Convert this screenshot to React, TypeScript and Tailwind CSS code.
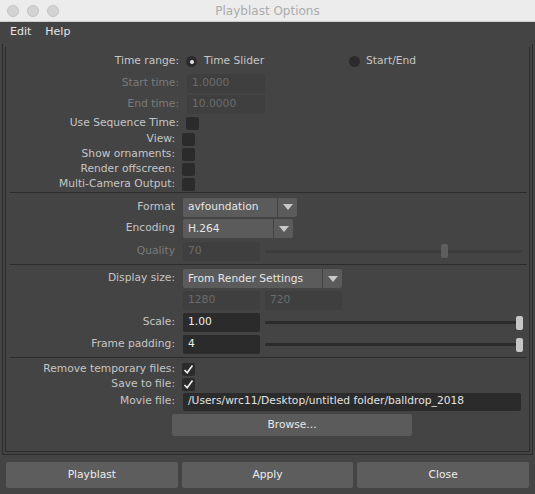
import React from 'react'

const Arrow = () => (
    <svg width="10" height="6" viewBox="0 0 10 6">
        <polygon points="0,0 10,0 5,6" fill="#c8c8c8" />
    </svg>
)

const Check = () => (
    <svg width="13" height="13" viewBox="0 0 13 13">
        <polyline points="2.5,7 5.2,9.8 10.5,2.5" fill="none" stroke="#f2f2f2" strokeWidth="1.6" />
    </svg>
)

function Box({ checked }: { checked?: boolean }) {
    return (
        <div className="w-[13px] h-[13px] rounded-[2px] bg-[#2b2b2b] flex items-center justify-center">
            {checked && <Check />}
        </div>
    )
}

function Dropdown({ value, w }: { value: string; w: string }) {
    return (
        <div className="flex h-[19px] gap-px">
            <div className={`${w} h-full bg-[#5b5b5b] rounded-l-[2px] pl-[5px] pt-px flex items-center text-[#e6e6e6]`}>
                {value}
            </div>
            <div className="w-[19px] h-full bg-[#5b5b5b] rounded-r-[2px] flex items-center justify-center">
                <Arrow />
            </div>
        </div>
    )
}

function Slider({ pos, disabled }: { pos: string; disabled?: boolean }) {
    return (
        <div className="relative flex-1 h-[14px] flex items-center mr-[7px]">
            <div className={`w-full h-[3px] rounded-full ${disabled ? 'bg-[#3c3c3c]' : 'bg-[#2b2b2b]'}`} />
            <div
                className={`absolute top-0 w-[7px] h-[14px] rounded-[2px] ${disabled ? 'bg-[#5e5e5e]' : 'bg-[#c6c6c6]'}`}
                style={{ left: pos }}
            />
        </div>
    )
}

const Sep = ({ className }: { className: string }) => (
    <div className={`${className} ml-[4px] mr-[2px] h-px bg-[#2c2c2c]`} />
)

export default function App() {
    return (
        <div className="w-[535px] h-[494px] bg-[#444444] flex flex-col font-['DejaVu_Sans',sans-serif] text-[10.7px] text-[#c6c6c6] overflow-hidden">
            {/* title bar */}
            <div className="h-[22px] shrink-0 bg-[#ececec] border-b border-[#cdcdcd] grid grid-cols-[70px_1fr_70px] items-center">
                <div className="flex gap-[8px] pl-[7px]">
                    <div className="w-[12px] h-[12px] rounded-full bg-[#d3d3d3] border border-[#c4c4c4]" />
                    <div className="w-[12px] h-[12px] rounded-full bg-[#d3d3d3] border border-[#c4c4c4]" />
                    <div className="w-[12px] h-[12px] rounded-full bg-[#d3d3d3] border border-[#c4c4c4]" />
                </div>
                <div className="text-center text-[12px] text-[#ababab] pt-px">Playblast Options</div>
                <div />
            </div>

            {/* menu */}
            <div className="h-[20px] shrink-0 flex items-center gap-[14px] pl-[10px] pt-px text-[11px] text-[#e4e4e4]">
                <span>Edit</span>
                <span>Help</span>
            </div>

            {/* frame */}
            <div className="mt-[2px] mx-[2px] h-[411px] shrink-0 border-x border-b border-[#2c2c2c] pt-[3px] px-[2px] pb-[2px] flex">
                <div className="flex-1 border-x border-b border-[#2c2c2c] pt-[3px] flex flex-col [&>div]:pt-px">
                    <div className="h-[22px] flex items-center">
                        <div className="w-[173px] text-right">Time range:</div>
                        <div className="ml-[7px] w-[11px] h-[11px] rounded-full bg-[#2b2b2b] flex items-center justify-center">
                            <div className="w-[4px] h-[4px] rounded-full bg-[#e8e8e8]" />
                        </div>
                        <span className="ml-[7px]">Time Slider</span>
                        <div className="ml-[85px] w-[11px] h-[11px] rounded-full bg-[#2b2b2b]" />
                        <span className="ml-[6px]">Start/End</span>
                    </div>
                    <div className="h-[21px] flex items-center">
                        <div className="w-[173px] text-right text-[#7b7b7b]">Start time:</div>
                        <div className="ml-[8px] w-[78px] h-[19px] bg-[#3f3f3f] rounded-[2px] pl-[5px] flex items-center text-[#6c6c6c]">1.0000</div>
                    </div>
                    <div className="h-[22px] flex items-center">
                        <div className="w-[173px] text-right text-[#7b7b7b]">End time:</div>
                        <div className="ml-[8px] w-[78px] h-[19px] bg-[#3f3f3f] rounded-[2px] pl-[5px] flex items-center text-[#6c6c6c]">10.0000</div>
                    </div>
                    <div className="h-[16px] flex items-center">
                        <div className="w-[173px] text-right">Use Sequence Time:</div>
                        <div className="ml-[7px]"><Box /></div>
                    </div>
                    {['View:', 'Show ornaments:', 'Render offscreen:', 'Multi-Camera Output:'].map((l) => (
                        <div key={l} className="h-[15px] flex items-center">
                            <div className="w-[169px] text-right">{l}</div>
                            <div className="ml-[7px]"><Box /></div>
                        </div>
                    ))}

                    <Sep className="mt-[1px] mb-[3px]" />

                    <div className="h-[21px] flex items-center">
                        <div className="w-[169px] text-right">Format</div>
                        <div className="ml-[8px]"><Dropdown value="avfoundation" w="w-[94px]" /></div>
                    </div>
                    <div className="h-[22px] flex items-center">
                        <div className="w-[169px] text-right">Encoding</div>
                        <div className="ml-[8px]"><Dropdown value="H.264" w="w-[90px]" /></div>
                    </div>
                    <div className="h-[23px] flex items-center">
                        <div className="w-[169px] text-right text-[#7b7b7b]">Quality</div>
                        <div className="ml-[8px] w-[77px] h-[19px] bg-[#3f3f3f] rounded-[2px] pl-[5px] flex items-center text-[#6c6c6c]">70</div>
                        <div className="ml-[5px] flex-1 flex"><Slider pos="68.4%" disabled /></div>
                    </div>

                    <Sep className="mt-[2px] mb-[3px]" />

                    <div className="h-[20px] flex items-center">
                        <div className="w-[169px] text-right">Display size:</div>
                        <div className="ml-[8px]"><Dropdown value="From Render Settings" w="w-[139px]" /></div>
                    </div>
                    <div className="h-[23px] flex items-center">
                        <div className="w-[169px]" />
                        <div className="ml-[8px] w-[77px] h-[19px] bg-[#3f3f3f] rounded-[2px] pl-[5px] flex items-center text-[#6c6c6c]">1280</div>
                        <div className="ml-[5px] w-[77px] h-[19px] bg-[#3f3f3f] rounded-[2px] pl-[5px] flex items-center text-[#6c6c6c]">720</div>
                    </div>
                    <div className="h-[22px] flex items-center">
                        <div className="w-[169px] text-right">Scale:</div>
                        <div className="ml-[8px] w-[77px] h-[19px] bg-[#2b2b2b] rounded-[2px] pl-[5px] flex items-center text-[#ececec]">1.00</div>
                        <div className="ml-[5px] flex-1 flex"><Slider pos="calc(100% - 6px)" /></div>
                    </div>
                    <div className="h-[22px] flex items-center">
                        <div className="w-[169px] text-right">Frame padding:</div>
                        <div className="ml-[8px] w-[77px] h-[19px] bg-[#2b2b2b] rounded-[2px] pl-[5px] flex items-center text-[#ececec]">4</div>
                        <div className="ml-[5px] flex-1 flex"><Slider pos="calc(100% - 6px)" /></div>
                    </div>

                    <Sep className="mt-[2px] mb-[3px]" />

                    <div className="h-[15px] flex items-center">
                        <div className="w-[169px] text-right">Remove temporary files:</div>
                        <div className="ml-[7px]"><Box checked /></div>
                    </div>
                    <div className="h-[15px] flex items-center">
                        <div className="w-[169px] text-right">Save to file:</div>
                        <div className="ml-[7px]"><Box checked /></div>
                    </div>
                    <div className="h-[20px] flex items-center">
                        <div className="w-[169px] text-right">Movie file:</div>
                        <div className="ml-[8px] mr-[8px] flex-1 h-[18px] bg-[#2b2b2b] rounded-[2px] pl-[5px] flex items-center text-[#e2e2e2]">
                            /Users/wrc11/Desktop/untitled folder/balldrop_2018
                        </div>
                    </div>
                    <div className="mt-[2px] h-[23px] flex">
                        <div className="ml-[166px] w-[240px] h-full bg-[#5b5b5b] rounded-[2px] flex items-center justify-center text-[#e8e8e8]">
                            Browse...
                        </div>
                    </div>
                </div>
            </div>

            {/* buttons */}
            <div className="mt-[7px] h-[26px] shrink-0 px-[6px] flex gap-[4px]">
                {['Playblast', 'Apply', 'Close'].map((b) => (
                    <div key={b} className="flex-1 bg-[#5d5d5d] rounded-[2px] pt-px flex items-center justify-center text-[#ececec]">
                        {b}
                    </div>
                ))}
            </div>
        </div>
    )
}
